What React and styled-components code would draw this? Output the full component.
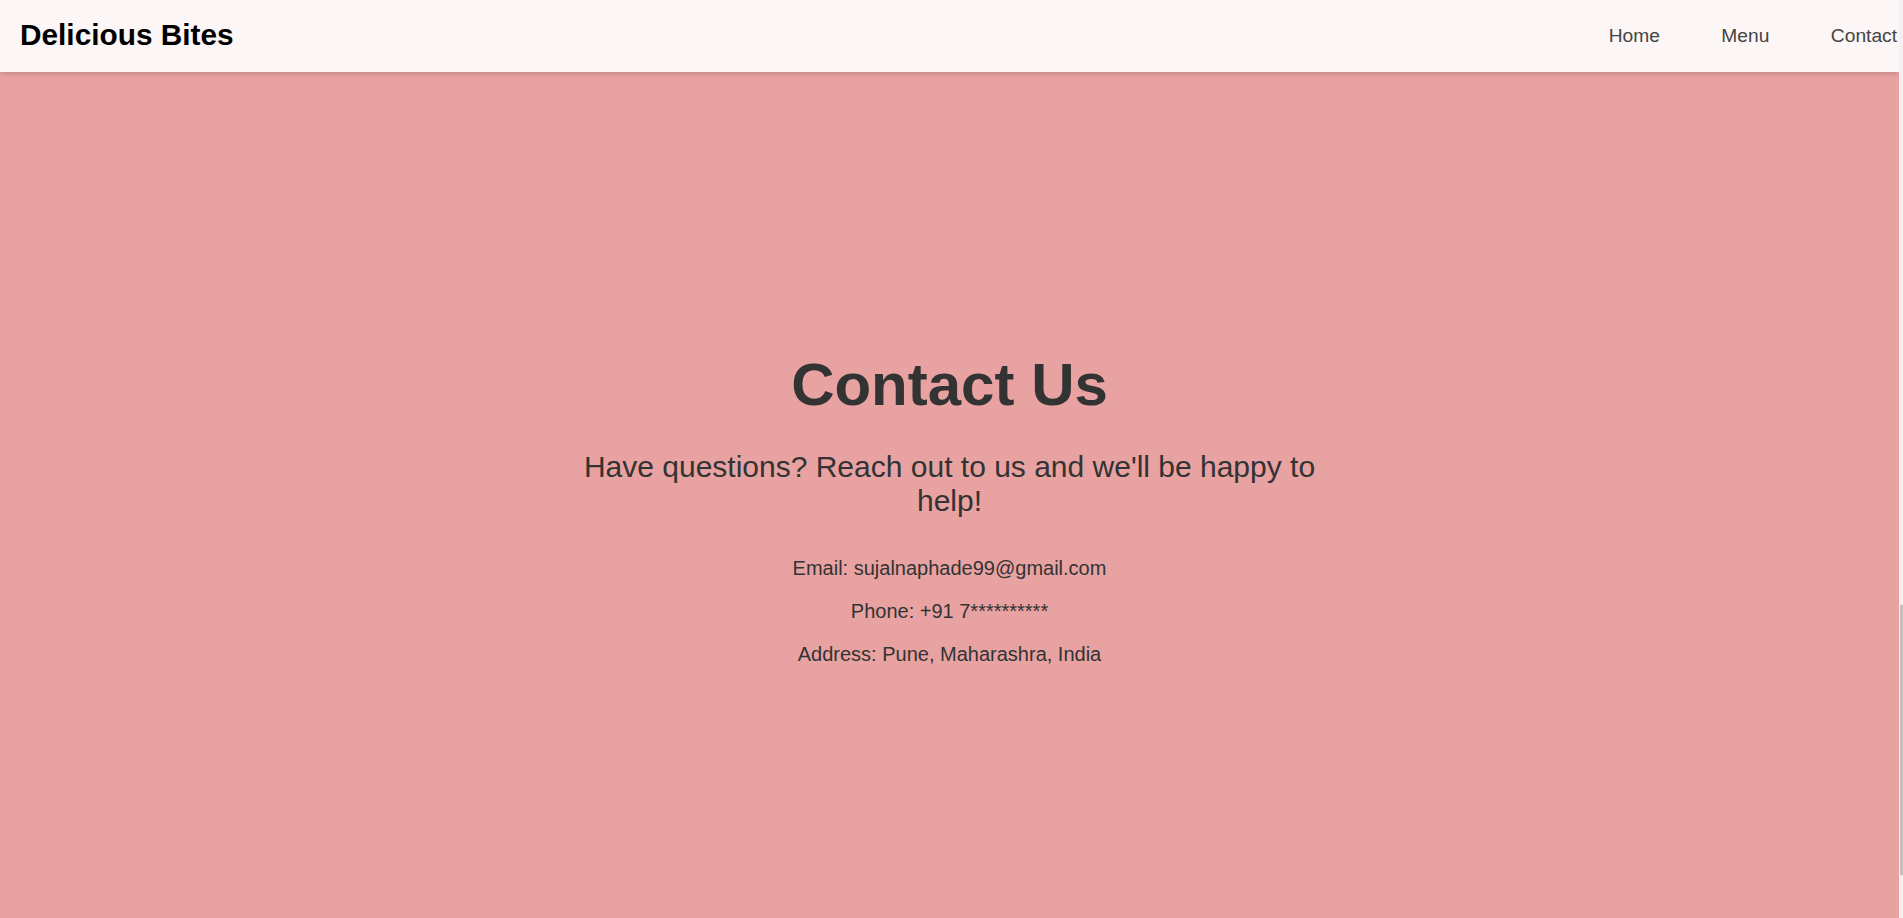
import React from 'react';
import styled, { createGlobalStyle } from 'styled-components';

const links = ['Home', 'Menu', 'Contact'];

const App = () => {
   return (
      <Page>
         <GlobalStyle />
         <Main>
            <Header>
               <Logo>Delicious Bites</Logo>
               <Nav>
                  {links.map((l) => (
                     <NavLink key={l} href={`#${l.toLowerCase()}`}>{l}</NavLink>
                  ))}
               </Nav>
            </Header>
            <Section id="contact">
               <Content>
                  <Title>Contact Us</Title>
                  <Lead>Have questions? Reach out to us and we'll be happy to help!</Lead>
                  <Info>
                     <Line>Email: sujalnaphade99@gmail.com</Line>
                     <Line>Phone: +91 7**********</Line>
                     <Line>Address: Pune, Maharashra, India</Line>
                  </Info>
               </Content>
            </Section>
         </Main>
         {/* thin scrollbar at the right edge, page scrolled to the bottom */}
         <ScrollTrack>
            <ScrollThumb />
         </ScrollTrack>
      </Page>
   );
}

/* Styles */
const GlobalStyle = createGlobalStyle`
   body {
      margin: 0;
      overflow: hidden;
      background: #e8a2a2;
      font-family: "Liberation Sans", Arial, sans-serif;
      color: #333;
   }
`;

const Page = styled.div`
   display: flex;
   height: 100vh;
`;

const Main = styled.div`
   flex: 1;
   min-width: 0;
   display: flex;
   flex-direction: column;
   overflow: hidden;
`;

const Header = styled.header`
   position: relative;
   z-index: 1;
   flex: none;
   height: 72px;
   box-sizing: border-box;
   padding: 0 2px 0 20px;
   display: flex;
   justify-content: space-between;
   align-items: center;
   background: #fcf6f6;
   box-shadow: 0 2px 5px rgba(0, 0, 0, .15);
`;

const Logo = styled.h1`
   margin: 0 0 3px;
   font-size: 29.8px;
   font-weight: 700;
   color: #000;
`;

const Nav = styled.nav`
   display: flex;
   gap: 61.5px;
`;

const NavLink = styled.a`
   font-size: 19.2px;
   color: #444;
   text-decoration: none;
`;

const Section = styled.section`
   flex: 1;
   box-sizing: border-box;
   padding: 26px 20px 0;
   display: flex;
   justify-content: center;
   align-items: center;
   background: #e8a2a2;
`;

const Content = styled.div`
   max-width: 800px;
   box-sizing: border-box;
   padding: 0 20px;
   text-align: center;
`;

const Title = styled.h2`
   margin: 0;
   font-size: 60px;
   font-weight: 700;
   color: #333;
`;

const Lead = styled.p`
   margin: 31px 0 39px;
   font-size: 30px;
   color: #333;
`;

const Info = styled.div`
   display: flex;
   flex-direction: column;
   gap: 20px;
`;

const Line = styled.p`
   margin: 0;
   font-size: 20px;
   color: #333;
`;

const ScrollTrack = styled.div`
   flex: none;
   width: 4px;
   display: flex;
   flex-direction: column;
   align-items: flex-end;
   background: #f1f1f1;
`;

const ScrollThumb = styled.div`
   width: 3px;
   height: 270px;
   margin-top: 605px;
   background: #c1c1c1;
`;

export default App;
